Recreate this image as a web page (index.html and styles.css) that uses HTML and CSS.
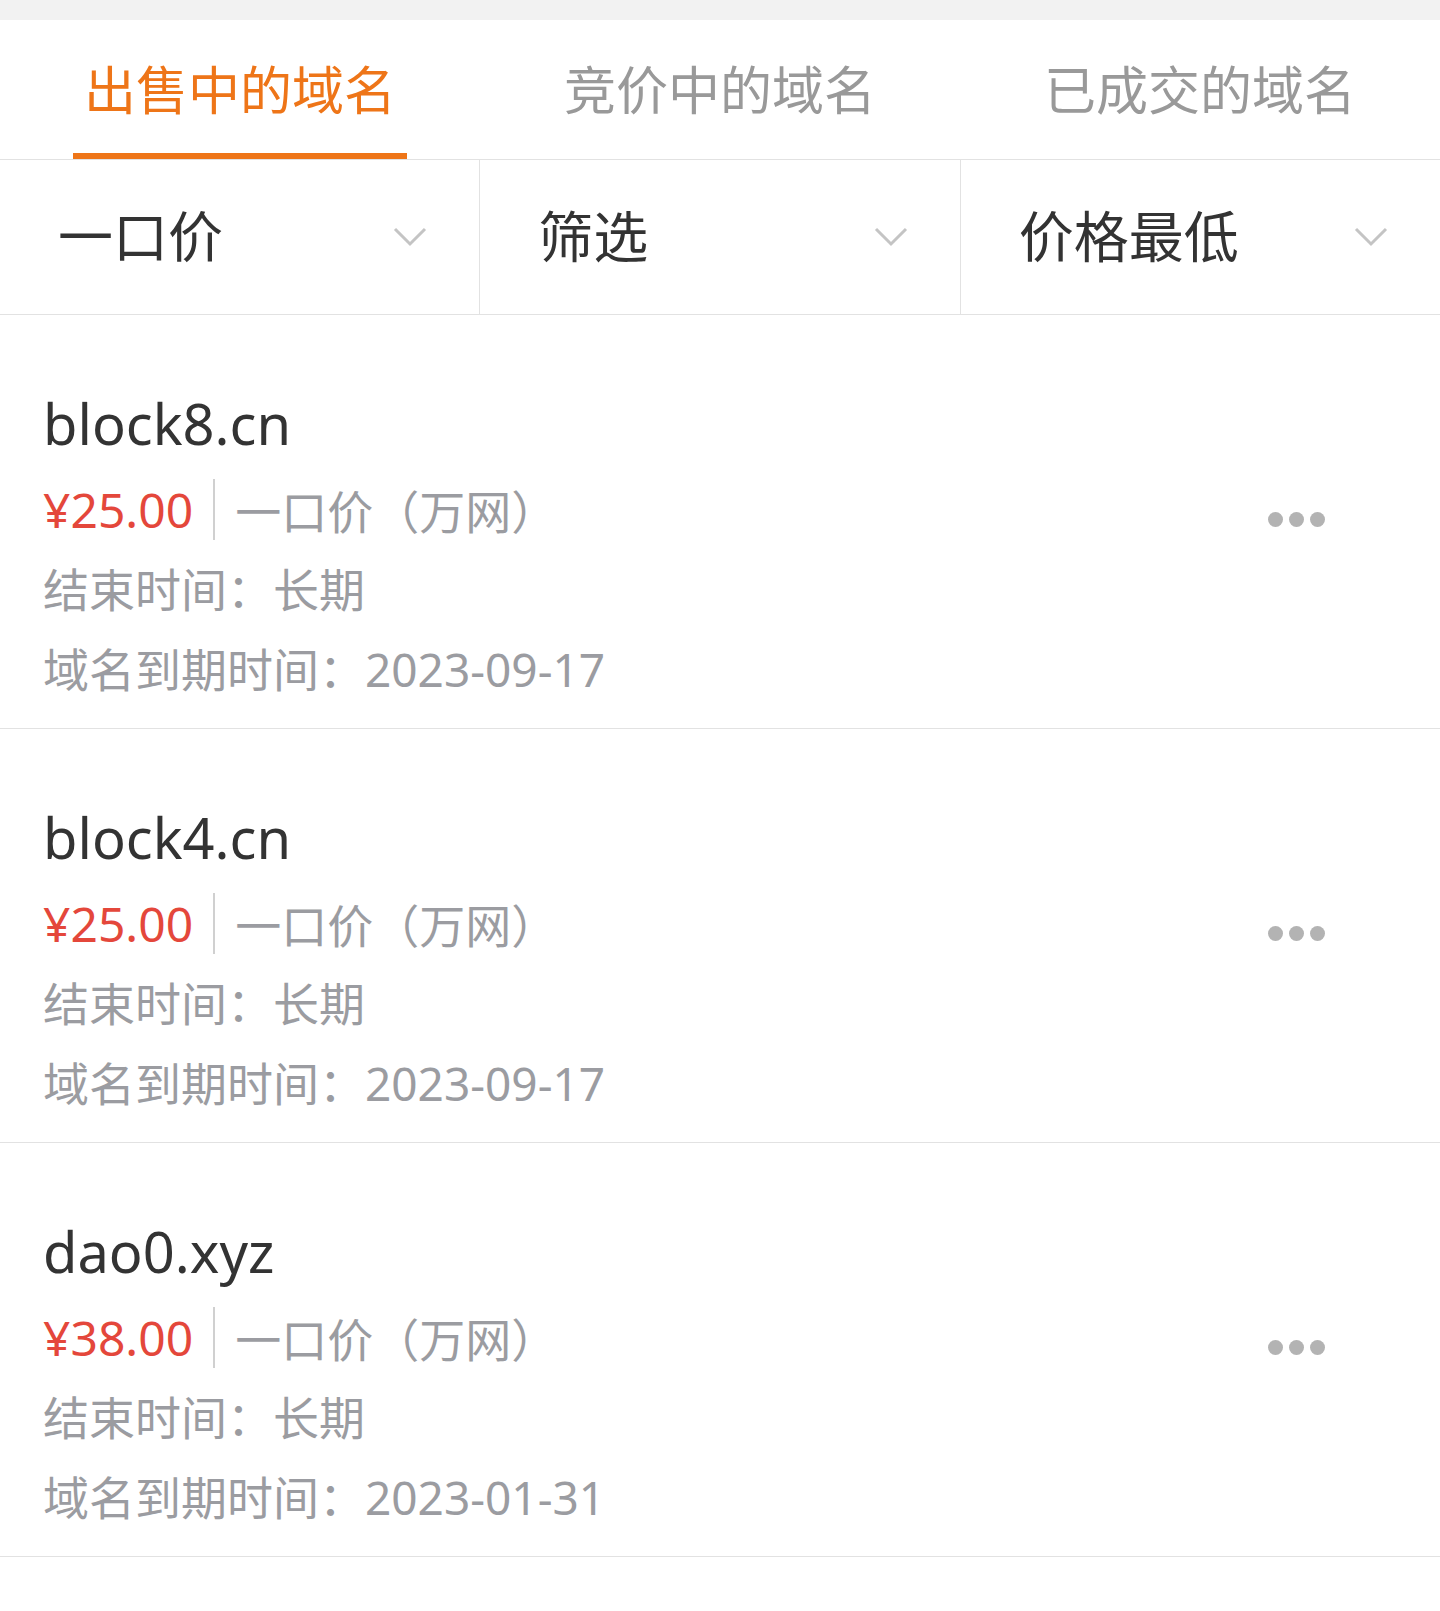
FILE: index.html
```html
<!DOCTYPE html>
<html lang="zh-CN">
<head>
    <meta charset="UTF-8">
    <meta name="viewport" content="width=device-width, initial-scale=1.0">
    <title>我的域名</title>
    <link rel="stylesheet" href="styles.css">
</head>
<body>

    <div class="topbar"></div>

    <div class="tabs">
        <div class="tab active"><span>出售中的域名</span></div>
        <div class="tab"><span>竞价中的域名</span></div>
        <div class="tab"><span>已成交的域名</span></div>
    </div>

    <div class="filters">
        <div class="filter">
            <span>一口价</span>
            <svg class="chevron" viewBox="0 0 34 20"><path d="M2 2 L17 17 L32 2"/></svg>
        </div>
        <div class="filter">
            <span>筛选</span>
            <svg class="chevron" viewBox="0 0 34 20"><path d="M2 2 L17 17 L32 2"/></svg>
        </div>
        <div class="filter">
            <span>价格最低</span>
            <svg class="chevron" viewBox="0 0 34 20"><path d="M2 2 L17 17 L32 2"/></svg>
        </div>
    </div>

    <div class="list">
        <div class="item">
            <div class="info">
                <div class="domain">block8.cn</div>
                <div class="price-row">
                    <span class="price">¥25.00</span>
                    <span class="sep"></span>
                    <span class="type">一口价（万网）</span>
                </div>
                <div class="meta">结束时间：长期</div>
                <div class="meta">域名到期时间：2023-09-17</div>
            </div>
            <div class="more"><i></i><i></i><i></i></div>
        </div>

        <div class="item">
            <div class="info">
                <div class="domain">block4.cn</div>
                <div class="price-row">
                    <span class="price">¥25.00</span>
                    <span class="sep"></span>
                    <span class="type">一口价（万网）</span>
                </div>
                <div class="meta">结束时间：长期</div>
                <div class="meta">域名到期时间：2023-09-17</div>
            </div>
            <div class="more"><i></i><i></i><i></i></div>
        </div>

        <div class="item">
            <div class="info">
                <div class="domain">dao0.xyz</div>
                <div class="price-row">
                    <span class="price">¥38.00</span>
                    <span class="sep"></span>
                    <span class="type">一口价（万网）</span>
                </div>
                <div class="meta">结束时间：长期</div>
                <div class="meta">域名到期时间：2023-01-31</div>
            </div>
            <div class="more"><i></i><i></i><i></i></div>
        </div>
    </div>

</body>
</html>
```

FILE: styles.css
```css
body {
    margin: 0;
    background: #fff;
    font-family: "Noto Sans", "Noto Sans CJK SC", sans-serif;
    color: #333;
}
.topbar {
    height: 20px;
    background: #f2f2f2;
}
.tabs {
    display: flex;
    height: 139px;
    border-bottom: 1px solid #e2e2e2;
}
.tab {
    flex: 1;
    display: flex;
    justify-content: center;
    align-items: center;
    position: relative;
    font-size: 52px;
    color: #999;
    padding-bottom: 4px;
}
.tab.active {
    color: #ee7518;
}
.tab.active::after {
    content: "";
    position: absolute;
    left: 73px;
    width: 334px;
    bottom: 0;
    height: 6px;
    background: #ee7518;
}
.filters {
    display: flex;
    height: 154px;
    border-bottom: 1px solid #e2e2e2;
}
.filter {
    flex: 1;
    display: flex;
    justify-content: space-between;
    align-items: center;
    padding: 0 52px 0 58px;
    font-size: 55px;
    color: #333;
    border-left: 1px solid #e2e2e2;
}
.filter:first-child {
    border-left: none;
}
.filter span {
    margin-bottom: 8px;
}
.chevron {
    width: 34px;
    height: 20px;
    fill: none;
    stroke: #c4c4c4;
    stroke-width: 3;
}
.item {
    display: flex;
    justify-content: space-between;
    height: 414px;
    box-sizing: border-box;
    padding: 62px 115px 0 43px;
    border-bottom: 1px solid #e2e2e2;
}
.domain {
    font-size: 56px;
    line-height: 92px;
    color: #333;
}
.price-row {
    display: flex;
    align-items: center;
    height: 80px;
}
.price {
    font-size: 48px;
    color: #e4473b;
}
.sep {
    width: 2px;
    height: 61px;
    margin: 0 20px;
    background: #d0d0d0;
}
.type {
    font-size: 46px;
    color: #9b9ca1;
}
.meta {
    font-size: 46px;
    line-height: 80px;
    color: #9b9ca1;
}
.more {
    display: flex;
    gap: 6px;
    align-self: center;
    margin-top: -66px;
}
.more i {
    width: 15px;
    height: 15px;
    border-radius: 50%;
    background: #b3b3b3;
}
```
